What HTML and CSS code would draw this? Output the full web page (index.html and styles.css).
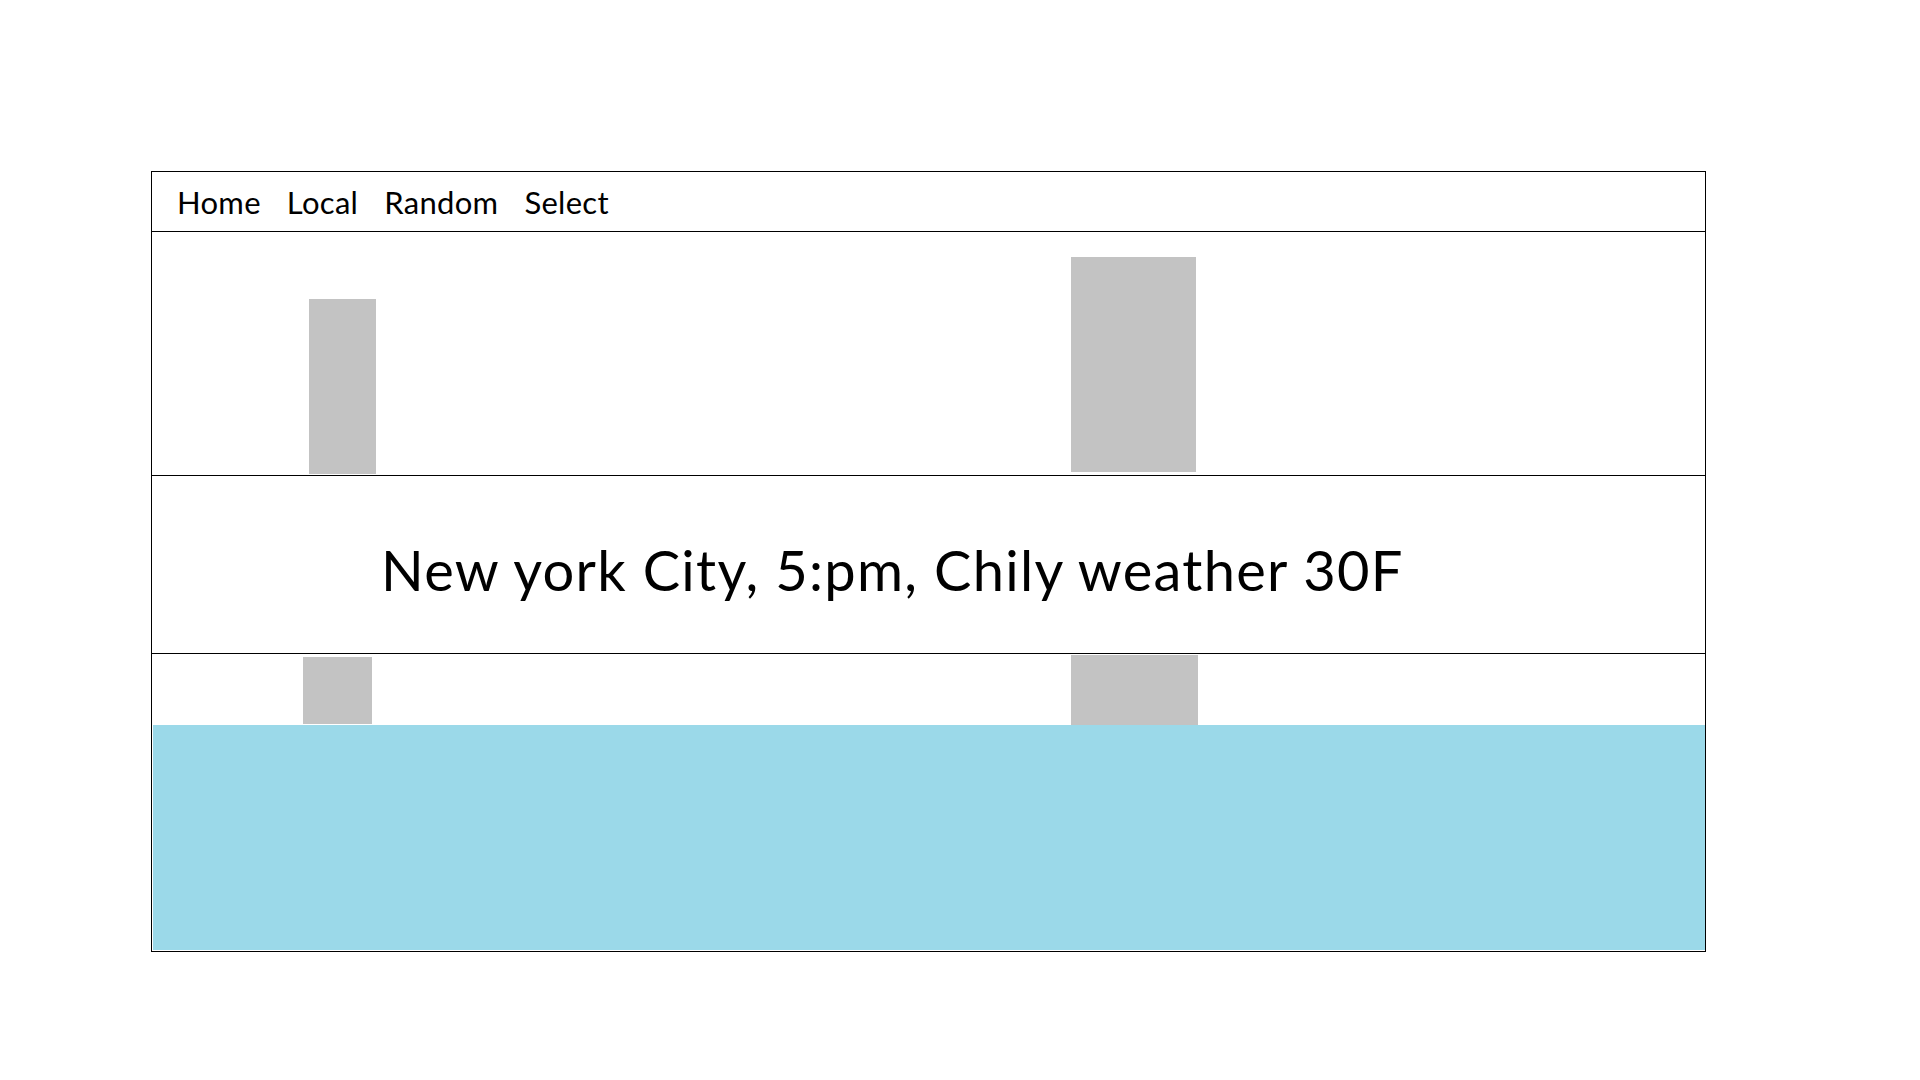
FILE: index.html
```html
<!DOCTYPE html>
<html lang="en">
<head>
<meta charset="utf-8">
<title>Weather</title>
<link rel="stylesheet" href="styles.css">
</head>
<body>
<div class="frame">
  <nav class="nav">
    <a class="nav-item">Home</a>
    <a class="nav-item">Local</a>
    <a class="nav-item">Random</a>
    <a class="nav-item">Select</a>
  </nav>
  <section class="top">
    <div class="block block-a"></div>
    <div class="block block-b"></div>
  </section>
  <section class="info">
    <p class="info-text">New york City, 5:pm, Chily weather 30F</p>
  </section>
  <section class="bottom">
    <div class="bottom-row">
      <div class="block block-c"></div>
      <div class="block block-d"></div>
    </div>
    <div class="water"></div>
  </section>
</div>
</body>
</html>
```
FILE: styles.css
```css
html, body {
  margin: 0;
  padding: 0;
  background: #ffffff;
}

body {
  font-family: Lato, "Open Sans", sans-serif;
  color: #000000;
}

.frame {
  box-sizing: border-box;
  margin: 171px 0 0 151px;
  width: 1555px;
  height: 781px;
  border: 1px solid #000000;
  display: flex;
  flex-direction: column;
}

.nav {
  box-sizing: border-box;
  height: 60px;
  border-bottom: 1px solid #000000;
  padding: 12px 0 0 25px;
  display: flex;
  gap: 26px;
  font-size: 31px;
  line-height: 1.2;
  letter-spacing: 0.3px;
}

.nav-item {
  color: #000000;
  text-decoration: none;
}

.block {
  background: #c3c3c3;
  flex: none;
}

.top {
  box-sizing: border-box;
  height: 244px;
  border-bottom: 1px solid #000000;
  display: flex;
  align-items: flex-end;
}

.block-a {
  width: 67px;
  height: 175px;
  margin: 0 0 1px 157px;
}

.block-b {
  width: 125px;
  height: 215px;
  margin: 0 0 3px 695px;
}

.info {
  box-sizing: border-box;
  height: 178px;
  border-bottom: 1px solid #000000;
  padding: 60px 0 0 229px;
}

.info-text {
  margin: 0;
  font-size: 56px;
  line-height: 1.2;
  letter-spacing: 1.3px;
  white-space: nowrap;
}

.bottom {
  flex: 1;
  display: flex;
  flex-direction: column;
}

.bottom-row {
  height: 71px;
  display: flex;
  align-items: flex-start;
}

.block-c {
  width: 69px;
  height: 67px;
  margin: 3px 0 0 151px;
}

.block-d {
  width: 127px;
  height: 70px;
  margin: 1px 0 0 699px;
}

.water {
  flex: 1;
  margin: 0 0 1px 1px;
  background: #9bd9e9;
}
```
